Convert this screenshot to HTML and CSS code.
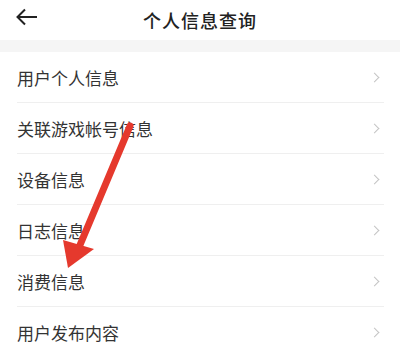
FILE: index.html
```html
<!DOCTYPE html>
<html lang="zh-CN">
<head>
    <meta charset="UTF-8">
    <meta name="viewport" content="width=device-width, initial-scale=1.0">
    <title>个人信息查询</title>
    <link rel="stylesheet" href="styles.css">
</head>
<body>
    <div class="page">
        <div class="header">
            <svg class="back" width="22" height="18" viewBox="0 0 22 18">
                <path d="M21 9H2M9 1.5L1.5 9L9 16.5" fill="none" stroke="#222" stroke-width="2"/>
            </svg>
            <h1>个人信息查询</h1>
        </div>
        <div class="band"></div>
        <ul class="list">
            <li class="row"><span>用户个人信息</span><i class="chev"></i></li>
            <li class="row"><span>关联游戏帐号信息</span><i class="chev"></i></li>
            <li class="row"><span>设备信息</span><i class="chev"></i></li>
            <li class="row"><span>日志信息</span><i class="chev"></i></li>
            <li class="row"><span>消费信息</span><i class="chev"></i></li>
            <li class="row"><span>用户发布内容</span><i class="chev"></i></li>
        </ul>
        <!-- annotation arrow drawn over the list -->
        <svg class="pointer" width="400" height="345" viewBox="0 0 400 345">
            <line x1="130" y1="126" x2="80" y2="245" stroke="#e5392d" stroke-width="7" stroke-linecap="round"/>
            <polygon points="63,240 94,249 68,268" fill="#e5392d"/>
        </svg>
    </div>
</body>
</html>
```

FILE: styles.css
```css
body {
    margin: 0;
    background-color: #fff;
    font-family: "Noto Sans CJK SC", "Noto Sans", sans-serif;
    color: #333;
}
.page {
    position: relative;
    width: 400px;
    height: 345px;
    overflow: hidden;
}
.header {
    height: 40px;
    display: flex;
    align-items: center;
    justify-content: center;
    position: relative;
}
.back {
    position: absolute;
    left: 16px;
    top: 8px;
}
.header h1 {
    margin: 0;
    font-size: 18px;
    font-weight: 500;
    color: #222;
    letter-spacing: 1px;
}
.band {
    height: 12px;
    background-color: #f5f5f5;
}
.list {
    list-style: none;
    margin: 0;
    padding: 0 16px 0 17px;
}
.row {
    height: 51px;
    border-bottom: 1px solid #efefef;
    display: flex;
    align-items: center;
    justify-content: space-between;
    font-size: 17px;
    box-sizing: border-box;
}
.chev {
    width: 6px;
    height: 6px;
    border-top: 1.5px solid #c4c4c4;
    border-right: 1.5px solid #c4c4c4;
    transform: rotate(45deg);
    margin-right: 6px;
}
.pointer {
    position: absolute;
    left: 0;
    top: 0;
}
```
